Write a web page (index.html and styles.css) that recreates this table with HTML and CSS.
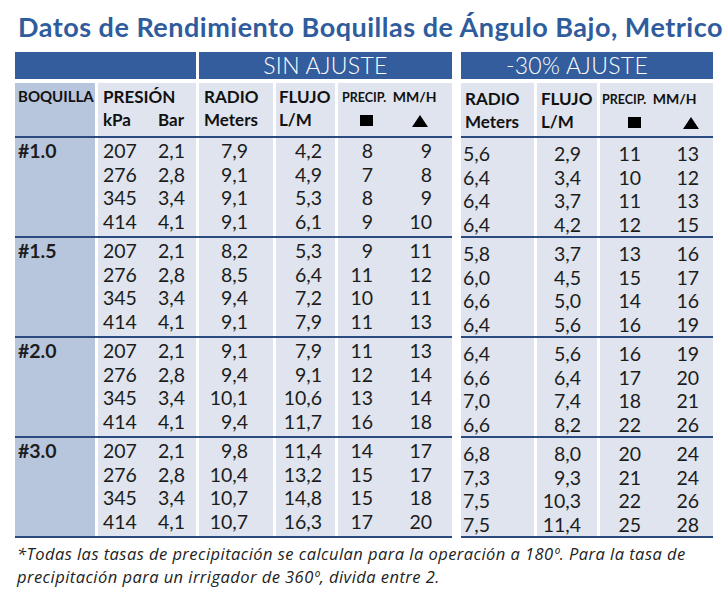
FILE: index.html
```html
<!DOCTYPE html>
<html lang="es">
<head>
<meta charset="utf-8">
<title>Datos de Rendimiento</title>
<link rel="stylesheet" href="styles.css">
</head>
<body>
<div class="page">
  <h1 class="title">Datos de Rendimiento Boquillas de Ángulo Bajo, Metrico</h1>
  <div class="tables">
    <div class="tbl tbl-left">
      <div class="row bars">
        <div class="bar bar-blank"></div>
        <div class="bar bar-main">SIN AJUSTE</div>
      </div>
      <div class="row head">
        <div class="cell c-boq"><span class="h-small">BOQUILLA</span></div>
        <div class="cell c-pres">
          <span class="h-full">PRESIÓN</span>
          <span>kPa</span><span>Bar</span>
        </div>
        <div class="cell c-radio"><span>RADIO</span><span>Meters</span></div>
        <div class="cell c-flujo"><span>FLUJO</span><span>L/M</span></div>
        <div class="cell c-precip">
          <span class="h-full h-precip"><small>PRECIP.</small> MM/H</span>
          <span class="sym"><i class="square"></i></span><span class="sym"><i class="tri"></i></span>
        </div>
      </div>

      <div class="row grp">
        <div class="cell c-boq">#1.0</div>
        <div class="cell c-pres"><span>207</span><span>2,1</span><span>276</span><span>2,8</span><span>345</span><span>3,4</span><span>414</span><span>4,1</span></div>
        <div class="cell c-radio"><span>7,9</span><span>9,1</span><span>9,1</span><span>9,1</span></div>
        <div class="cell c-flujo"><span>4,2</span><span>4,9</span><span>5,3</span><span>6,1</span></div>
        <div class="cell c-precip"><span>8</span><span>9</span><span>7</span><span>8</span><span>8</span><span>9</span><span>9</span><span>10</span></div>
      </div>
      <div class="row grp">
        <div class="cell c-boq">#1.5</div>
        <div class="cell c-pres"><span>207</span><span>2,1</span><span>276</span><span>2,8</span><span>345</span><span>3,4</span><span>414</span><span>4,1</span></div>
        <div class="cell c-radio"><span>8,2</span><span>8,5</span><span>9,4</span><span>9,1</span></div>
        <div class="cell c-flujo"><span>5,3</span><span>6,4</span><span>7,2</span><span>7,9</span></div>
        <div class="cell c-precip"><span>9</span><span>11</span><span>11</span><span>12</span><span>10</span><span>11</span><span>11</span><span>13</span></div>
      </div>
      <div class="row grp">
        <div class="cell c-boq">#2.0</div>
        <div class="cell c-pres"><span>207</span><span>2,1</span><span>276</span><span>2,8</span><span>345</span><span>3,4</span><span>414</span><span>4,1</span></div>
        <div class="cell c-radio"><span>9,1</span><span>9,4</span><span>10,1</span><span>9,4</span></div>
        <div class="cell c-flujo"><span>7,9</span><span>9,1</span><span>10,6</span><span>11,7</span></div>
        <div class="cell c-precip"><span>11</span><span>13</span><span>12</span><span>14</span><span>13</span><span>14</span><span>16</span><span>18</span></div>
      </div>
      <div class="row grp">
        <div class="cell c-boq">#3.0</div>
        <div class="cell c-pres"><span>207</span><span>2,1</span><span>276</span><span>2,8</span><span>345</span><span>3,4</span><span>414</span><span>4,1</span></div>
        <div class="cell c-radio"><span>9,8</span><span>10,4</span><span>10,7</span><span>10,7</span></div>
        <div class="cell c-flujo"><span>11,4</span><span>13,2</span><span>14,8</span><span>16,3</span></div>
        <div class="cell c-precip"><span>14</span><span>17</span><span>15</span><span>17</span><span>15</span><span>18</span><span>17</span><span>20</span></div>
      </div>
    </div>

    <div class="tbl tbl-right">
      <div class="row bars">
        <div class="bar bar-main">-30% AJUSTE</div>
      </div>
      <div class="row head">
        <div class="cell c-radio"><span>RADIO</span><span>Meters</span></div>
        <div class="cell c-flujo"><span>FLUJO</span><span>L/M</span></div>
        <div class="cell c-precip">
          <span class="h-full h-precip"><small>PRECIP.</small> MM/H</span>
          <span class="sym"><i class="square"></i></span><span class="sym"><i class="tri"></i></span>
        </div>
      </div>

      <div class="row grp">
        <div class="cell c-radio"><span>5,6</span><span>6,4</span><span>6,4</span><span>6,4</span></div>
        <div class="cell c-flujo"><span>2,9</span><span>3,4</span><span>3,7</span><span>4,2</span></div>
        <div class="cell c-precip"><span>11</span><span>13</span><span>10</span><span>12</span><span>11</span><span>13</span><span>12</span><span>15</span></div>
      </div>
      <div class="row grp">
        <div class="cell c-radio"><span>5,8</span><span>6,0</span><span>6,6</span><span>6,4</span></div>
        <div class="cell c-flujo"><span>3,7</span><span>4,5</span><span>5,0</span><span>5,6</span></div>
        <div class="cell c-precip"><span>13</span><span>16</span><span>15</span><span>17</span><span>14</span><span>16</span><span>16</span><span>19</span></div>
      </div>
      <div class="row grp">
        <div class="cell c-radio"><span>6,4</span><span>6,6</span><span>7,0</span><span>6,6</span></div>
        <div class="cell c-flujo"><span>5,6</span><span>6,4</span><span>7,4</span><span>8,2</span></div>
        <div class="cell c-precip"><span>16</span><span>19</span><span>17</span><span>20</span><span>18</span><span>21</span><span>22</span><span>26</span></div>
      </div>
      <div class="row grp">
        <div class="cell c-radio"><span>6,8</span><span>7,3</span><span>7,5</span><span>7,5</span></div>
        <div class="cell c-flujo"><span>8,0</span><span>9,3</span><span>10,3</span><span>11,4</span></div>
        <div class="cell c-precip"><span>20</span><span>24</span><span>21</span><span>24</span><span>22</span><span>26</span><span>25</span><span>28</span></div>
      </div>
    </div>
  </div>
  <p class="note">*Todas las tasas de precipitación se calculan para la operación a 180º. Para la tasa de<br>precipitación para un irrigador de 360º, divida entre 2.</p>
</div>
</body>
</html>
```

FILE: styles.css
```css
html, body {
  margin: 0;
  padding: 0;
  background: #ffffff;
}

.page {
  width: 728px;
  height: 600px;
  font-family: Lato, "Open Sans", sans-serif;
  color: #1c1c1c;
}

.title {
  box-sizing: border-box;
  height: 52px;
  margin: 0;
  padding: 12px 0 0 18px;
  font-size: 27px;
  line-height: 30px;
  letter-spacing: 0.5px;
  font-weight: 700;
  color: #2f5c9c;
  white-space: nowrap;
}

.tables {
  display: flex;
  gap: 9px;
  padding-left: 15px;
}

.row {
  display: grid;
  column-gap: 3px;
}

.tbl-left .row {
  grid-template-columns: 80px 98px 74px 59px 114px;
}

.tbl-right .row {
  grid-template-columns: 73px 60px 113px;
}

/* blue bars */
.bars {
  height: 27px;
  margin-bottom: 4px;
}

.bar {
  background: #335d9c;
  color: #ffffff;
  font-size: 23px;
  font-weight: 300;
  line-height: 27px;
  letter-spacing: 0.3px;
  text-align: center;
}

.tbl-left .bar-blank { grid-column: 1 / 3; }
.tbl-left .bar-main { grid-column: 3 / 6; }
.tbl-right .bar-main { grid-column: 1 / -1; padding-right: 20px; }

/* cells */
.cell {
  background: #dfe4ee;
}

.c-boq {
  background: #b8c6dd;
}

.head {
  height: 53px;
  border-bottom: 2px solid #2b4b80;
}

.head .cell {
  display: flex;
  flex-direction: column;
  box-sizing: border-box;
  padding-top: 2px;
  font-size: 17px;
  line-height: 23px;
  font-weight: 700;
  color: #111;
}

.tbl-right .head .cell {
  padding-top: 4px;
}

.head .c-boq {
  padding-left: 3px;
}

.h-small {
  font-size: 15px;
}

.grp {
  height: 98px;
  border-bottom: 2px solid #2b4b80;
}

.grp .cell {
  box-sizing: border-box;
  padding-top: 1px;
  font-size: 19.5px;
  line-height: 23.5px;
  display: flex;
  flex-direction: column;
}

.tbl-right .grp .cell {
  padding-top: 4px;
}

.grp .c-boq {
  padding-left: 3px;
  font-weight: 700;
}

/* presion: two sub-columns */
.cell.c-pres {
  display: grid;
  grid-template-columns: 55px auto;
  align-content: start;
  padding-left: 5px;
}

.h-full {
  grid-column: 1 / -1;
}

/* radio / flujo */
.tbl-left .head .c-radio { padding-left: 5px; }
.tbl-left .head .c-flujo { padding-left: 3px; }
.tbl-left .grp .c-radio { align-items: flex-end; padding-right: 25px; }
.tbl-left .grp .c-flujo { align-items: flex-end; padding-right: 13px; }

.tbl-right .head .c-radio { padding-left: 4px; }
.tbl-right .head .c-flujo { padding-left: 4px; }
.tbl-right .grp .c-radio { padding-left: 2px; }
.tbl-right .grp .c-flujo { align-items: flex-end; padding-right: 16px; }

/* precip: two right-aligned sub-columns */
.cell.c-precip {
  display: grid;
  align-content: start;
  justify-items: end;
}

.tbl-left .cell.c-precip {
  grid-template-columns: 31px 59px;
  padding-left: 4px;
}

.tbl-right .cell.c-precip {
  grid-template-columns: 39px 58px;
  padding-left: 2px;
}

.h-precip {
  justify-self: start;
  font-size: 14px;
  white-space: nowrap;
}

.h-precip small {
  font-size: 12.5px;
  margin-right: 3px;
}

.sym {
  height: 23px;
  display: flex;
  align-items: center;
}

.square {
  display: block;
  width: 13px;
  height: 11px;
  background: #000;
}

.tri {
  display: block;
  width: 0;
  height: 0;
  border-left: 8px solid transparent;
  border-right: 8px solid transparent;
  border-bottom: 12px solid #000;
  margin-right: 4px;
}

.tbl-right .tri {
  margin-right: 0;
  border-left-width: 8.5px;
  border-right-width: 8.5px;
}

.note {
  margin: 5px 0 0 17px;
  font-family: "Open Sans", Lato, sans-serif;
  font-size: 16.5px;
  line-height: 22.5px;
  letter-spacing: 0.45px;
  font-style: italic;
  color: #222;
  white-space: nowrap;
}
```
